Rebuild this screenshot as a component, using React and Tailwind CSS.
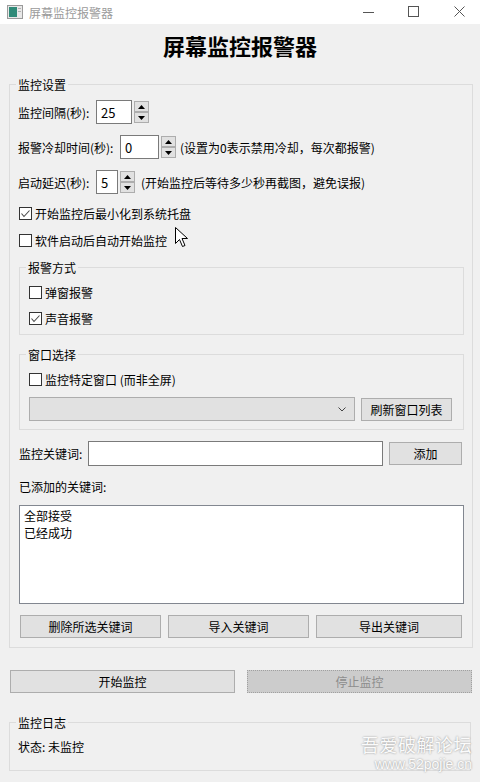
import clsx from 'clsx';

function Check({ checked, label, className }) {
  return (
    <div className={clsx('flex h-[20px] items-center', className)}>
      <span className="flex h-[13px] w-[13px] items-center justify-center border border-[#333333] bg-white">
        {checked && (
          <svg width="11" height="11" viewBox="0 0 11 11">
            <path d="M1.5 5.5 L4 8.5 L9.5 2.5" fill="none" stroke="#4a4a4a" strokeWidth="1.1" />
          </svg>
        )}
      </span>
      <span className="ml-[3px]">{label}</span>
    </div>
  );
}

function Arrow({ up }) {
  return (
    <div className="flex h-[11px] w-[15px] items-center justify-center border border-[#adadad] bg-[#e1e1e1]">
      <svg width="7" height="4" viewBox="0 0 7 4">
        {up ? <path d="M0 4 L3.5 0 L7 4 Z" fill="#000" /> : <path d="M0 0 L3.5 4 L7 0 Z" fill="#000" />}
      </svg>
    </div>
  );
}

function Spin({ value, boxClass }) {
  return (
    <div className="flex h-[24px]">
      <div className={clsx('flex items-center border border-[#7a7a7a] bg-white pl-[4px] text-[13px]', boxClass)}>
        {value}
      </div>
      <div className="ml-[2px] flex flex-col justify-between py-[1px]">
        <Arrow up />
        <Arrow />
      </div>
    </div>
  );
}

function Btn({ children, className }) {
  return (
    <div className={clsx('flex items-center justify-center border border-[#adadad] bg-[#e1e1e1]', className)}>
      {children}
    </div>
  );
}

function Group({ title, className, legendClass, children }) {
  return (
    <fieldset className={clsx('border border-[#dcdcdc]', className)}>
      <legend className={clsx('px-[2px] leading-[17px]', legendClass)}>{title}</legend>
      {children}
    </fieldset>
  );
}

export default function App() {
  return (
    <div className="relative h-[782px] w-[480px] overflow-hidden bg-[#f0f0f0] font-['Noto_Sans_CJK_SC','Noto_Sans',sans-serif] text-[12px] leading-[17px] text-black">
      {/* title bar */}
      <div className="flex h-[24px] items-center bg-white">
        <svg className="ml-[7px]" width="16" height="14" viewBox="0 0 16 14">
          <rect x="0.5" y="0.5" width="15" height="13" fill="#e8e8e8" stroke="#9a9a9a" />
          <rect x="2" y="2" width="8" height="10" fill="#2f8a78" />
          <rect x="11" y="3" width="3" height="1" fill="#b0b0b0" />
          <rect x="11" y="6" width="3" height="1" fill="#b0b0b0" />
        </svg>
        <span className="ml-[6px] text-[12px] text-[#9b9b9b]">屏幕监控报警器</span>
        <div className="ml-auto flex items-center">
          <svg width="12" height="12" viewBox="0 0 12 12"><path d="M0 6.5 H11" stroke="#555" /></svg>
          <svg className="ml-[33px]" width="12" height="12" viewBox="0 0 12 12"><rect x="0.5" y="0.5" width="10" height="10" fill="none" stroke="#555" /></svg>
          <svg className="ml-[34px] mr-[14px]" width="12" height="12" viewBox="0 0 12 12"><path d="M0.5 0.5 L10.5 10.5 M10.5 0.5 L0.5 10.5" stroke="#555" /></svg>
        </div>
      </div>

      {/* heading */}
      <div className="pt-[6px] text-center text-[22px] font-bold leading-[30px]">屏幕监控报警器</div>

      {/* settings group */}
      <Group title="监控设置" className="mx-[9px] mt-[16px] pl-[8px] pr-[8px] pb-[9px]" legendClass="-ml-[2px]">
        <div className="mt-[7px] flex h-[24px] items-center">
          <span className="w-[78px]">监控间隔(秒):</span>
          <Spin value="25" boxClass="w-[36px]" />
        </div>
        <div className="mt-[11px] flex h-[24px] items-center">
          <span className="w-[102px]">报警冷却时间(秒):</span>
          <Spin value="0" boxClass="w-[39px]" />
          <span className="ml-[4px]">(设置为0表示禁用冷却，每次都报警)</span>
        </div>
        <div className="mt-[11px] flex h-[24px] items-center">
          <span className="w-[78px]">启动延迟(秒):</span>
          <Spin value="5" boxClass="w-[22px]" />
          <span className="ml-[6px]">(开始监控后等待多少秒再截图，避免误报)</span>
        </div>
        <Check checked label="开始监控后最小化到系统托盘" className="mt-[9px] ml-[1px]" />
        <Check label="软件启动后自动开始监控" className="mt-[7px] ml-[1px]" />

        <Group title="报警方式" className="mt-[9px] ml-[1px] pl-[9px] pb-[6px]" legendClass="-ml-[3px]">
          <Check label="弹窗报警" className="mt-[6px]" />
          <Check checked label="声音报警" className="mt-[6px]" />
        </Group>

        <Group title="窗口选择" className="mt-[11px] ml-[1px] pl-[9px] pr-[11px] pb-[8px]" legendClass="-ml-[3px]">
          <Check label="监控特定窗口 (而非全屏)" className="mt-[6px]" />
          <div className="mt-[8px] flex h-[24px] items-center">
            <div className="flex h-[24px] w-[326px] items-center justify-end border border-[#adadad] bg-[#e1e1e1] pr-[8px]">
              <svg width="8" height="5" viewBox="0 0 8 5"><path d="M0.5 0.5 L4 4 L7.5 0.5" fill="none" stroke="#444" /></svg>
            </div>
            <Btn className="ml-[6px] h-[23px] w-[91px]">刷新窗口列表</Btn>
          </div>
        </Group>

        <div className="mt-[11px] flex h-[25px] items-center">
          <span className="ml-[1px] w-[69px]">监控关键词:</span>
          <div className="h-[25px] w-[295px] border border-[#7a7a7a] bg-white" />
          <Btn className="ml-[6px] h-[23px] w-[73px]">添加</Btn>
        </div>

        <div className="mt-[12px] ml-[1px]">已添加的关键词:</div>

        <div className="mt-[10px] ml-[1px] h-[99px] w-[445px] border border-[#828790] bg-white px-[4px] pt-[1px]">
          <div>全部接受</div>
          <div>已经成功</div>
        </div>

        <div className="mt-[11px] ml-[2px] flex h-[23px] gap-[7px]">
          <Btn className="w-[141px]">删除所选关键词</Btn>
          <Btn className="w-[141px]">导入关键词</Btn>
          <Btn className="w-[146px]">导出关键词</Btn>
        </div>
      </Group>

      {/* start / stop */}
      <div className="ml-[10px] mt-[22px] grid h-[23px] w-[462px] grid-cols-2 gap-[12px]">
        <Btn>开始监控</Btn>
        <div className="flex items-center justify-center border border-dotted border-[#a0a0a0] bg-[#cccccc] text-[#8c8c8c]">
          停止监控
        </div>
      </div>

      {/* log group */}
      <Group title="监控日志" className="mx-[9px] mt-[21px] pl-[8px] pb-[15px]" legendClass="-ml-[2px]">
        <div className="mt-[7px]">状态: 未监控</div>
      </Group>

      {/* mouse cursor */}
      <svg className="absolute left-[175px] top-[227px]" width="13" height="21" viewBox="0 0 13 21">
        <path d="M0.5 0.5 L0.5 16.5 L4.5 12.5 L7.5 19.5 L10 18.5 L7 11.5 L12.5 11.5 Z" fill="#fff" stroke="#000" strokeLinejoin="round" />
      </svg>

      {/* watermark */}
      <div className="pointer-events-none absolute left-[358px] top-[732px] flex w-[114px] flex-col items-end text-[#fbfbfb] [text-shadow:0_0_2px_rgba(0,0,0,0.45)]">
        <span className="text-[18px] leading-[24px] tracking-[0.5px]">吾爱破解论坛</span>
        <span className="mt-[1px] font-['Liberation_Sans',sans-serif] text-[14px] leading-[14px]">www.52pojie.cn</span>
      </div>
    </div>
  );
}
